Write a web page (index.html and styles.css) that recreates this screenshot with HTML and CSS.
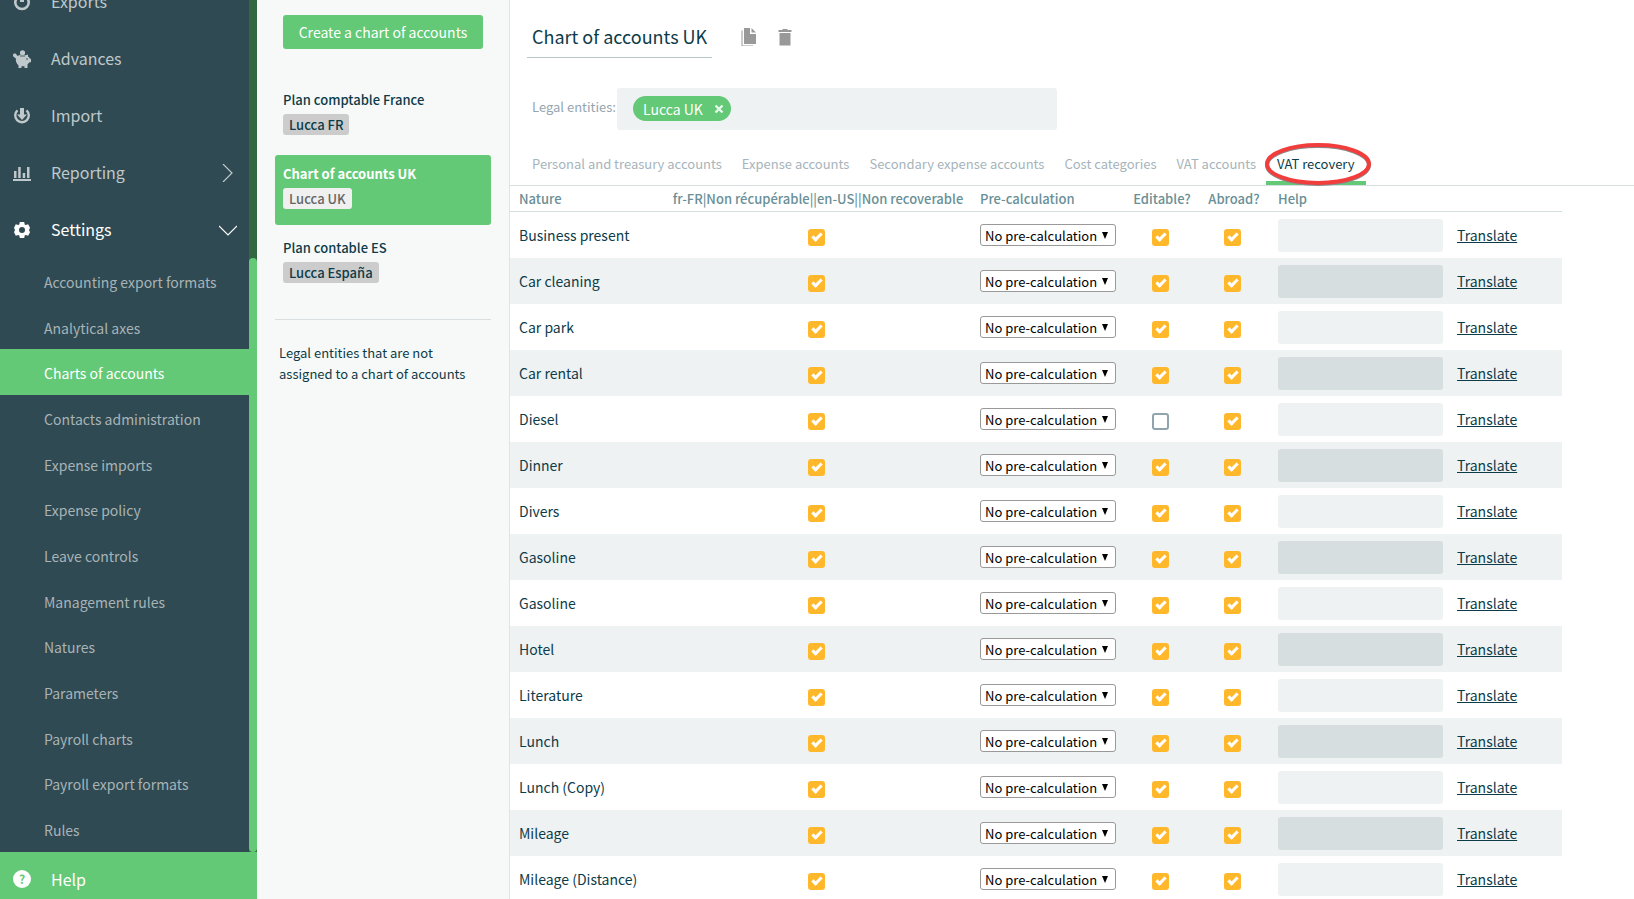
FILE: index.html
```html
<!DOCTYPE html>
<html lang="en">
<head>
    <meta charset="UTF-8">
    <meta name="viewport" content="width=device-width, initial-scale=1.0">
    <title>Charts of accounts</title>
    <link rel="stylesheet" href="styles.css">
</head>
<body>
    <div class="layout">
        <nav class="sidebar">
            <div class="menu">
                <a class="menu-item first" href="#">
                    <svg class="icon" viewBox="0 0 18 18"><path d="M5 4a6.7 6.7 0 1 0 8 0" fill="none" stroke="currentColor" stroke-width="2.6"/><path d="M7 9V5H4.500L9 0l4.500 5H11v4z" fill="currentColor"/></svg>
                    <span>Exports</span>
                </a>
                <a class="menu-item" href="#">
                    <svg class="icon" viewBox="0 0 18 18" fill="currentColor"><circle cx="9.500" cy="2.800" r="2.600"/><path d="M0 4.500C.5 3 3 3 3.500 4.500L4.500 6C6.500 4.600 10 4.300 12.500 5.200L15 4.500v2c1 .8 1.500 1.300 2 2.200h1v3.600h-1.500L14.500 14.500V18h-3v-1.800H8.500V18h-3v-2.800C3.500 13.800 2.500 11.500 2.900 8.600L1.200 7.300C0 6.800 0 5.500 0 4.500z"/><circle cx="14" cy="9" r=".8" fill="#2f4a52"/><path d="M7 6h5" stroke="#2f4a52" stroke-width=".8"/></svg>
                    <span>Advances</span>
                </a>
                <a class="menu-item" href="#">
                    <svg class="icon" viewBox="0 0 18 18"><path d="M4.500 3.300a6.800 6.800 0 1 0 9 0" fill="none" stroke="currentColor" stroke-width="2.400"/><path d="M7 1h4v6.500h3L9 13 4 7.500h3z" fill="currentColor"/></svg>
                    <span>Import</span>
                </a>
                <a class="menu-item" href="#">
                    <svg class="icon" viewBox="0 0 18 18" fill="currentColor"><path d="M0 15h18v2H0zM1 7h2.500v7H1zM5.200 3h2.500v11H5.200zM9.700 9h2.500v5H9.700zM14 3h2.500v11H14z"/></svg>
                    <span>Reporting</span>
                    <svg class="chevron" viewBox="0 0 18 18"><path d="M4 0l9 9-9 9" fill="none" stroke="currentColor" stroke-width="1.200"/></svg>
                </a>
                <a class="menu-item open" href="#">
                    <svg class="icon" viewBox="0 0 18 18"><path fill="currentColor" fill-rule="evenodd" d="M6.800 1h4.400l.5 2.400 1.100.6 2.400-.8L17 6.800l-1 2.200 1 2.200-1.800 3.600-2.400-.8-1.100.6-.5 2.400H6.800l-.5-2.400-1.100-.6-2.400.8L1 11.200 2 9 1 6.800l1.800-3.600 2.400.8 1.100-.6zM9 6a3 3 0 1 0 0 6 3 3 0 0 0 0-6z"/></svg>
                    <span>Settings</span>
                    <svg class="chevron" viewBox="0 0 18 18"><path d="M0 5l9 9 9-9" fill="none" stroke="currentColor" stroke-width="1.200"/></svg>
                </a>
                <div class="submenu">
                    <a href="#">Accounting export formats</a>
                    <a href="#">Analytical axes</a>
                    <a class="active" href="#">Charts of accounts</a>
                    <a href="#">Contacts administration</a>
                    <a href="#">Expense imports</a>
                    <a href="#">Expense policy</a>
                    <a href="#">Leave controls</a>
                    <a href="#">Management rules</a>
                    <a href="#">Natures</a>
                    <a href="#">Parameters</a>
                    <a href="#">Payroll charts</a>
                    <a href="#">Payroll export formats</a>
                    <a href="#">Rules</a>
                </div>
                <div class="scrollbar"><div class="thumb"></div></div>
            </div>
            <a class="help" href="#">
                <span class="help-icon">?</span>
                <span>Help</span>
            </a>
        </nav>

        <aside class="panel">
            <button class="create" type="button">Create a chart of accounts</button>
            <a class="chart" href="#">
                <span class="chart-name">Plan comptable France</span>
                <span class="label">Lucca FR</span>
            </a>
            <a class="chart selected" href="#">
                <span class="chart-name">Chart of accounts UK</span>
                <span class="label">Lucca UK</span>
            </a>
            <a class="chart" href="#">
                <span class="chart-name">Plan contable ES</span>
                <span class="label">Lucca España</span>
            </a>
            <p class="unassigned">Legal entities that are not assigned to a chart of accounts</p>
        </aside>

        <main class="content">
            <header class="title-bar">
                <input class="title" type="text" value="Chart of accounts UK" aria-label="Name">
                <button class="icon-button" type="button" aria-label="Copy">
                    <svg viewBox="0 0 18 18" fill="currentColor"><path d="M4 0h6v6h6v10H4zM11.500 0L16 4.500h-4.500zM1.500 2.500h1v15H13v1H1.500z"/></svg>
                </button>
                <button class="icon-button" type="button" aria-label="Delete">
                    <svg viewBox="0 0 18 18" fill="currentColor"><path d="M2.500 2H6l1-1h4l1 1h3.500v2h-13zM3.500 5h11v12.500h-11z"/></svg>
                </button>
            </header>

            <div class="entities">
                <span class="entities-label">Legal entities:</span>
                <div class="entities-box">
                    <span class="tag">Lucca UK
                        <button type="button" aria-label="Remove Lucca UK">
                            <svg viewBox="0 0 10 10"><path d="M1.500 1.500l7 7M8.500 1.500l-7 7" stroke="currentColor" stroke-width="2.400"/></svg>
                        </button>
                    </span>
                </div>
            </div>

            <div class="tabs">
                <a href="#">Personal and treasury accounts</a>
                <a href="#">Expense accounts</a>
                <a href="#">Secondary expense accounts</a>
                <a href="#">Cost categories</a>
                <a href="#">VAT accounts</a>
                <a class="current" href="#">VAT recovery
                    <svg class="circle" viewBox="0 0 110 48"><ellipse cx="55" cy="25" rx="51" ry="19" fill="none" stroke="#8a8a8a" stroke-width="4"/><ellipse cx="55" cy="24" rx="51" ry="19" fill="none" stroke="#f23d3d" stroke-width="4"/></svg>
                </a>
            </div>

            <table class="natures">
                <colgroup>
                    <col>
                    <col class="col-recovery">
                    <col class="col-calculation">
                    <col class="col-editable">
                    <col class="col-abroad">
                    <col class="col-help">
                    <col class="col-translate">
                </colgroup>
                <thead>
                    <tr>
                        <th>Nature</th>
                        <th class="center">fr-FR|Non récupérable||en-US||Non recoverable</th>
                        <th>Pre-calculation</th>
                        <th class="center">Editable?</th>
                        <th class="center">Abroad?</th>
                        <th>Help</th>
                        <th></th>
                    </tr>
                </thead>
                <tbody id="rows"></tbody>
            </table>
        </main>
    </div>

    <script>
        const natures = [
            "Business present", "Car cleaning", "Car park", "Car rental", "Diesel",
            "Dinner", "Divers", "Gasoline", "Gasoline", "Hotel", "Literature",
            "Lunch", "Lunch (Copy)", "Mileage", "Mileage (Distance)"
        ];

        function checkbox(label, checked) {
            return `<td class="center"><input type="checkbox" aria-label="${label}" ${checked ? "checked" : ""}></td>`;
        }

        document.getElementById("rows").innerHTML = natures.map(name => `
            <tr>
                <td>${name}</td>
                ${checkbox("Non recoverable", true)}
                <td><div class="select"><select aria-label="Pre-calculation"><option>No pre-calculation</option></select></div></td>
                ${checkbox("Editable", name !== "Diesel")}
                ${checkbox("Abroad", true)}
                <td><input class="help-text" type="text" aria-label="Help"></td>
                <td><a href="#">Translate</a></td>
            </tr>
        `).join("");
    </script>
</body>
</html>
```

FILE: styles.css
```css
* {
    box-sizing: border-box;
}
body {
    margin: 0;
    font-family: "Noto Sans CJK JP", "Open Sans", sans-serif;
    font-size: 13px;
    color: #0c3c49;
    background-color: #fff;
}
a {
    color: inherit;
    text-decoration: none;
}
button, input, select {
    font-family: inherit;
    font-size: inherit;
}
.layout {
    display: flex;
    height: 100vh;
    overflow: hidden;
}

/* sidebar */
.sidebar {
    flex: 0 0 257px;
    display: flex;
    flex-direction: column;
    background-color: #2f4a52;
    color: #bfc8cb;
}
.menu {
    position: relative;
    flex: 1;
    min-height: 0;
    display: flex;
    flex-direction: column;
    padding-right: 8px;
    overflow: hidden;
}
.menu-item {
    flex: 0 0 57px;
    display: flex;
    align-items: center;
    padding: 0 12px 0 13px;
    font-size: 16px;
}
.menu-item span {
    padding-bottom: 2px;
}
/* the menu is scrolled half an item down */
.menu-item.first {
    margin-top: -27px;
}
.menu-item.open {
    color: #fff;
}
.icon {
    width: 18px;
    height: 18px;
    margin-right: 20px;
}
.chevron {
    width: 18px;
    height: 18px;
    margin-left: auto;
}
.submenu {
    flex: 1;
    display: flex;
    flex-direction: column;
    font-size: 14px;
    color: #a8b3b7;
}
.submenu a {
    flex: 1;
    display: flex;
    align-items: center;
    padding: 2px 0 0 44px;
}
.submenu .active {
    background-color: #63c976;
    color: #fff;
}
.scrollbar {
    position: absolute;
    top: 0;
    right: 0;
    bottom: 0;
    width: 8px;
    padding-top: 258px;
    background-color: #33673f;
}
.thumb {
    height: 100%;
    border-radius: 4px;
    background-color: #63c976;
}
.help {
    flex: 0 0 47px;
    display: flex;
    align-items: center;
    padding: 7px 13px 0;
    font-size: 16px;
    background-color: #63c976;
    color: #fff;
}
.help-icon {
    width: 18px;
    height: 18px;
    margin-right: 20px;
    border-radius: 50%;
    background-color: #fff;
    color: #63c976;
    font-size: 12px;
    font-weight: bold;
    line-height: 18px;
    text-align: center;
}

/* list of charts */
.panel {
    flex: 0 0 253px;
    padding: 15px 18px;
    background-color: #f7f9f8;
    border-right: 1px solid #dce4e5;
}
.create {
    display: block;
    width: 200px;
    height: 34px;
    margin: 0 8px 32px;
    padding: 0;
    border: 0;
    border-radius: 3px;
    background-color: #63c976;
    color: #fff;
    font-size: 14px;
}
.chart {
    display: block;
    height: 70px;
    margin-bottom: 4px;
    padding: 8px;
    border-radius: 3px;
    font-weight: 500;
}
.chart.selected {
    background-color: #63c976;
}
.chart-name {
    display: block;
    margin-bottom: 4px;
    line-height: 21px;
}
.selected .chart-name {
    color: #fff;
    font-weight: bold;
}
.label {
    display: inline-block;
    padding: 0 6px;
    border-radius: 3px;
    background-color: #ccc;
    line-height: 21px;
}
.selected .label {
    background-color: #f0f0f0;
    color: #666;
}
.unassigned {
    margin: 20px 0 0;
    padding: 22px 4px 0;
    border-top: 1px solid #d9dfe0;
    line-height: 21px;
}

/* main area */
.content {
    flex: 1;
    min-width: 0;
}
.title-bar {
    display: flex;
    align-items: center;
    padding: 16px 17px 0;
}
.title {
    width: 185px;
    height: 42px;
    margin-right: 27px;
    padding: 0 5px 2px;
    border: 0;
    border-bottom: 1px solid #b8c5ca;
    background: none;
    color: inherit;
    font-size: 18px;
}
.icon-button {
    width: 20px;
    height: 20px;
    margin-right: 16px;
    padding: 1px;
    border: 0;
    background: none;
    color: #999;
}
.icon-button svg {
    display: block;
    width: 18px;
    height: 18px;
}
.entities {
    display: flex;
    margin: 30px 22px 0;
}
.entities-label {
    width: 85px;
    color: #96a5b0;
    line-height: 38px;
}
.entities-box {
    flex: 0 1 440px;
    height: 42px;
    padding: 8px 16px;
    border-radius: 3px;
    background-color: #eef2f3;
}
.tag {
    display: inline-flex;
    align-items: center;
    height: 25px;
    padding: 0 7px 0 10px;
    border-radius: 13px;
    background-color: #63c976;
    color: #fff;
    font-size: 14px;
}
.tag button {
    width: 10px;
    height: 10px;
    margin-left: 11px;
    padding: 0;
    border: 0;
    background: none;
    color: #e8f7eb;
}
.tag svg {
    display: block;
}
.tabs {
    display: flex;
    height: 56px;
    padding: 0 11px;
    border-bottom: 1px solid #d6e0e1;
    color: #a6b4bb;
    line-height: 20px;
}
.tabs a {
    padding: 24px 10px 0;
    white-space: nowrap;
}
.tabs a:first-child {
    padding-left: 11px;
}
.tabs .current {
    position: relative;
    padding: 24px 11px 0;
    border-bottom: 4px solid #63c976;
    color: #0c3c49;
}
.circle {
    position: absolute;
    top: 10px;
    left: -3px;
    width: 110px;
    height: 48px;
}

/* natures table */
.natures {
    width: calc(100% - 72px);
    table-layout: fixed;
    border-spacing: 0;
}
.col-recovery {
    width: 306px;
}
.col-calculation {
    width: 154px;
}
.col-editable {
    width: 74px;
}
.col-abroad {
    width: 70px;
}
.col-help {
    width: 179px;
}
.col-translate {
    width: 114px;
}
.natures th {
    height: 26px;
    padding: 0 9px;
    border-bottom: 1px solid #d6e0e1;
    color: #6a8f96;
    font-weight: 500;
    text-align: left;
    white-space: nowrap;
}
.natures td {
    height: 46px;
    padding: 0 9px;
    font-size: 14px;
}
.natures .center {
    padding: 0;
    text-align: center;
}
.natures tbody tr:nth-child(even) {
    background-color: #eef2f3;
}
.natures td a {
    text-decoration: underline;
}
.select {
    position: relative;
    width: 136px;
}
.select::after {
    content: "";
    position: absolute;
    top: 8px;
    right: 8px;
    border: 3px solid transparent;
    border-top: 7px solid #000;
    border-bottom: 0;
    pointer-events: none;
}
.select select {
    display: block;
    width: 100%;
    height: 22px;
    padding: 0 4px;
    border: 1px solid #999;
    border-radius: 3px;
    background-color: #fff;
    color: #000;
    font-size: 13px;
    appearance: none;
}
.natures input[type="checkbox"] {
    position: relative;
    width: 17px;
    height: 17px;
    margin: 2px 3px 0 0;
    border: 2px solid #90a4ae;
    border-radius: 3px;
    background-color: #fff;
    vertical-align: middle;
    appearance: none;
}
.natures input[type="checkbox"]:checked {
    border-color: #ffb82b;
    background-color: #ffb82b;
}
.natures input[type="checkbox"]:checked::after {
    content: "";
    position: absolute;
    top: 0;
    left: 4px;
    width: 3px;
    height: 7px;
    border: solid #fff;
    border-width: 0 3px 3px 0;
    transform: rotate(45deg);
}
.help-text {
    display: block;
    width: 165px;
    height: 33px;
    padding: 0 8px;
    border: 0;
    border-radius: 3px;
    background-color: #eef2f3;
}
tr:nth-child(even) .help-text {
    background-color: #d6dedf;
}
```
